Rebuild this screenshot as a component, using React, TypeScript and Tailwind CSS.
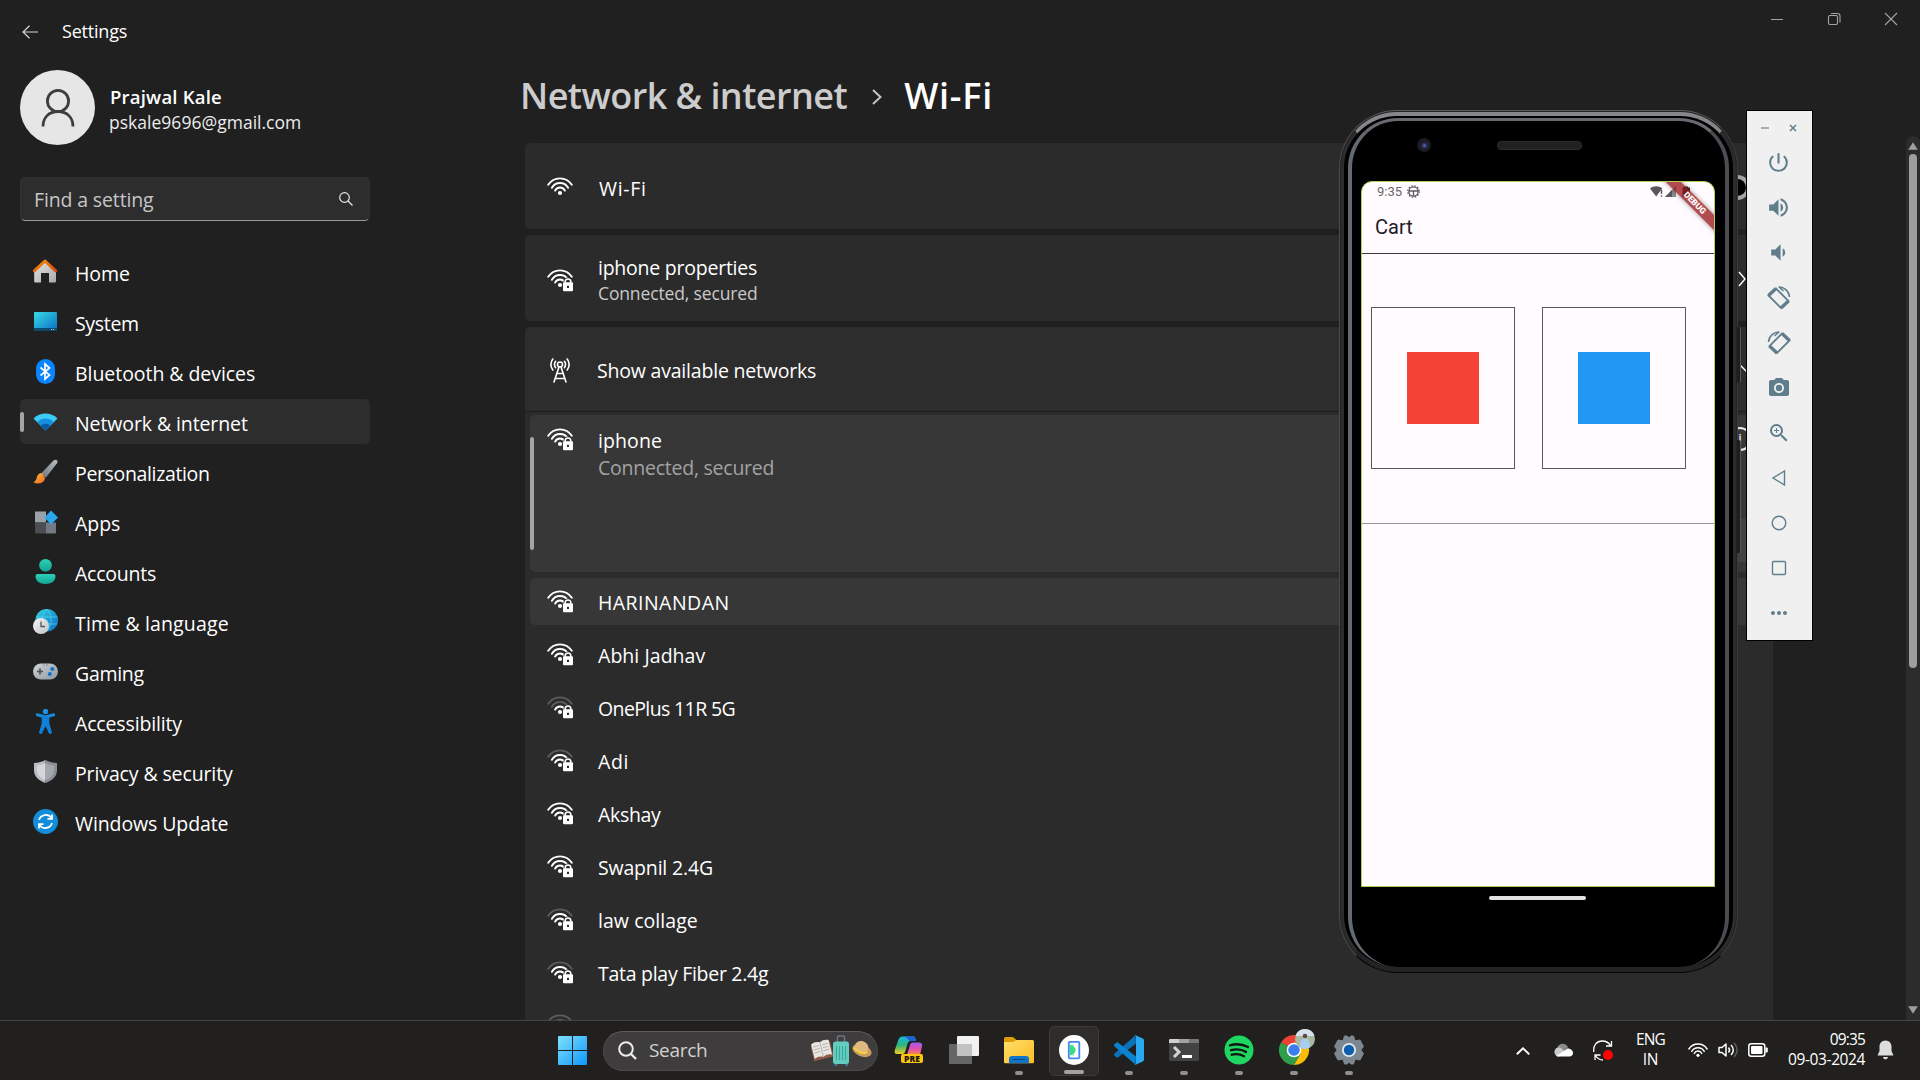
import React from "react";
import { MdPhotoCamera, MdVolumeDown, MdVolumeUp, MdZoomIn, MdMoreHoriz, MdPowerSettingsNew } from "react-icons/md";

/* ---------- Sidebar icons (25 x 25) ---------- */

const HomeIcon = () => (
  <svg width="25" height="25" viewBox="0 0 25 25">
    <defs>
      <linearGradient id="hb" x1="0" y1="0" x2="1" y2="1"><stop stopColor="#e6e6e6" /><stop offset="1" stopColor="#a9a9a9" /></linearGradient>
      <linearGradient id="hr" x1="0" y1="0" x2="1" y2="1"><stop stopColor="#f9920b" /><stop offset="1" stopColor="#d94a0a" /></linearGradient>
    </defs>
    <path d="M1.2 11 12 1.5 23 11v11.5a1 1 0 0 1-1 1h-6V14H8v9.500H2.200a1 1 0 0 1-1-1z" fill="url(#hb)" />
    <path d="M1.300 11.800 12 2 22.700 11.800" fill="none" stroke="url(#hr)" strokeWidth="3" strokeLinecap="round" strokeLinejoin="round" />
  </svg>
);

const SystemIcon = () => (
  <svg width="25" height="25" viewBox="0 0 25 25">
    <defs><linearGradient id="sy" x1="0" y1="0" x2="1" y2="1"><stop stopColor="#36dbe6" /><stop offset="1" stopColor="#0b6dc4" /></linearGradient></defs>
    <rect x="1" y="3" width="23" height="19" rx="1" fill="url(#sy)" />
    <path d="M1 19h23v2a1 1 0 0 1-1 1H2a1 1 0 0 1-1-1z" fill="#0b4a6d" />
    <path d="M18.200 20.500h1M20.200 20.500h1" stroke="#cfe8f5" />
  </svg>
);

const BluetoothIcon = () => (
  <svg width="25" height="25" viewBox="0 0 25 25">
    <rect x="3" y="0" width="19" height="25" rx="9.500" fill="#0a84ff" />
    <path d="M7.500 8.500l9 7.500-4.500 4V5L16.500 9l-9 7.500" fill="none" stroke="#fff" strokeWidth="1.700" />
  </svg>
);

const NetworkIcon = () => (
  <svg width="25" height="25" viewBox="0 0 25 25">
    <path d="M.5 9.500C7 2.800 18 2.800 24.500 9.500L12.500 21.500z" fill="#3ccbf4" />
    <path d="M4.300 13c4.700-4.600 11.700-4.600 16.400 0l-8.200 8.500z" fill="#1490df" />
    <path d="M7.800 16.700c2.700-2.500 6.700-2.500 9.400 0l-4.700 4.800z" fill="#0c59a4" />
  </svg>
);

const BrushIcon = () => (
  <svg width="25" height="25" viewBox="0 0 25 25">
    <defs>
      <linearGradient id="b1" x1="1" y1="0" x2="0" y2="1"><stop stopColor="#b9c0c6" /><stop offset="1" stopColor="#6a747c" /></linearGradient>
      <linearGradient id="b2" x1="0" y1="0" x2="1" y2="1"><stop stopColor="#fdc12d" /><stop offset="1" stopColor="#f0622a" /></linearGradient>
    </defs>
    <path d="M8 14.500 20.500 1.500C23 -.4 25.600 1.500 24 4.300L12.800 18.800z" fill="url(#b1)" />
    <path d="M9.300 14c-2.900-.2-5 1.600-5.500 4.600-.4 2.300-1.300 3.500-3.300 4.600 4 2.200 10.600 1.600 11.500-4z" fill="url(#b2)" />
  </svg>
);

const AppsIcon = () => (
  <svg width="25" height="25" viewBox="0 0 25 25">
    <path d="M2 2.500h11v11H2z" fill="#9ba1a9" />
    <path d="M2 13.500h11v11H3a1 1 0 0 1-1-1z" fill="#4a4e53" />
    <path d="M13 13.500h10v10a1 1 0 0 1-1 1h-9z" fill="#737982" />
    <path d="M18 1.500l7 7-7 7-6.500-7z" fill="#29a8ef" />
  </svg>
);

const AccountsIcon = () => (
  <svg width="25" height="25" viewBox="0 0 25 25">
    <defs><linearGradient id="ac" x1="0" y1="0" x2="0" y2="1"><stop stopColor="#2ed0b8" /><stop offset="1" stopColor="#12a594" /></linearGradient></defs>
    <circle cx="12.500" cy="6.300" r="6.300" fill="url(#ac)" />
    <path d="M4.500 15h16a2 2 0 0 1 2 2c0 5-4 8-10 8s-10-3-10-8a2 2 0 0 1 2-2z" fill="url(#ac)" />
  </svg>
);

const TimeIcon = () => (
  <svg width="25" height="25" viewBox="0 0 25 25">
    <defs>
      <linearGradient id="ti" x1="0" y1="0" x2="1" y2="1"><stop stopColor="#35d3e0" /><stop offset="1" stopColor="#0a6cc9" /></linearGradient>
      <linearGradient id="tc" x1="0" y1="0" x2="1" y2="1"><stop stopColor="#f6f6f6" /><stop offset="1" stopColor="#bfc1c4" /></linearGradient>
    </defs>
    <circle cx="13.700" cy="11.300" r="11.300" fill="url(#ti)" />
    <path d="M3 8h21.500M6 15h18M13.700 0c-6 7-6 15 0 22.500M13.700 0c6 7 6 15 0 22.500" stroke="#5fe0ee" strokeOpacity=".6" fill="none" />
    <circle cx="8" cy="17" r="8" fill="url(#tc)" />
    <path d="M8 12.500v5h4" fill="none" stroke="#555" strokeWidth="1.300" />
  </svg>
);

const GamingIcon = () => (
  <svg width="25" height="25" viewBox="0 0 25 25">
    <defs><linearGradient id="ga" x1="0" y1="0" x2="1" y2="1"><stop stopColor="#d0d4d9" /><stop offset="1" stopColor="#9097a0" /></linearGradient></defs>
    <rect x="0" y="4.500" width="25" height="16" rx="8" fill="url(#ga)" />
    <path d="M7 9.500v6M4 12.500h6" stroke="#4c5157" strokeWidth="1.700" />
    <circle cx="19.300" cy="10" r="2" fill="#1173cf" /><circle cx="16.800" cy="15" r="2" fill="#1173cf" />
    <path d="M10.500 6h1M13.500 6h1" stroke="#4c5157" />
  </svg>
);

const AccessIcon = () => (
  <svg width="25" height="25" viewBox="0 0 25 25">
    <circle cx="12.500" cy="2.600" r="2.700" fill="#1a94e8" />
    <path d="M4.300 5.800 12.500 8l8.200-2.200" fill="none" stroke="#1389e0" strokeWidth="3" strokeLinecap="round" strokeLinejoin="round" />
    <path d="M8.700 7.500h7.600v7l2.500 8.300a1.600 1.600 0 0 1-3.100 1L12.500 17l-3.200 6.800a1.600 1.600 0 0 1-3.100-1l2.500-8.300z" fill="#1080da" />
  </svg>
);

const ShieldIcon = () => (
  <svg width="25" height="25" viewBox="0 0 25 25">
    <path d="M12.500.8C9.500 3 5.500 3.800 1 4v7c0 6.500 4.500 10.500 11.500 13z" fill="#b9bdc4" />
    <path d="M12.500.8C15.500 3 19.500 3.800 24 4v7c0 6.500-4.500 10.500-11.500 13z" fill="#8c9096" />
    <path d="M12.500 4C10 5.700 7.500 6.300 4 6.500V11c0 4.700 3 7.800 8.500 10z" fill="#d3d7dc" />
    <path d="M12.500 4C15 5.700 17.500 6.300 21 6.500V11c0 4.700-3 7.800-8.500 10z" fill="#a4a8ae" />
  </svg>
);

const UpdateIcon = () => (
  <svg width="25" height="25" viewBox="0 0 25 25">
    <circle cx="12.500" cy="12.500" r="12.500" fill="#128ddb" />
    <path d="M6 11a7 7 0 0 1 12.500-2M19 5.500v4.300h-4.500M19 14a7 7 0 0 1-12.500 2M6 19.500v-4.300h4.500" fill="none" stroke="#fff" strokeWidth="1.800" />
  </svg>
);

const NAV: { label: string; icon: React.ReactNode; track: string; active?: boolean }[] = [
  { label: "Home", icon: <HomeIcon />, track: "tracking-[-0.05px]" },
  { label: "System", icon: <SystemIcon />, track: "tracking-[-0.33px]" },
  { label: "Bluetooth & devices", icon: <BluetoothIcon />, track: "tracking-[-0.05px]" },
  { label: "Network & internet", icon: <NetworkIcon />, track: "tracking-[-0.1px]", active: true },
  { label: "Personalization", icon: <BrushIcon />, track: "tracking-[-0.35px]" },
  { label: "Apps", icon: <AppsIcon />, track: "tracking-[-0.06px]" },
  { label: "Accounts", icon: <AccountsIcon />, track: "tracking-[-0.23px]" },
  { label: "Time & language", icon: <TimeIcon />, track: "tracking-[0.14px]" },
  { label: "Gaming", icon: <GamingIcon />, track: "tracking-[-0.29px]" },
  { label: "Accessibility", icon: <AccessIcon />, track: "tracking-[-0.15px]" },
  { label: "Privacy & security", icon: <ShieldIcon />, track: "tracking-[-0.12px]" },
  { label: "Windows Update", icon: <UpdateIcon />, track: "tracking-[-0.1px]" },
];

/* ---------- Network icons ---------- */

function Wifi({ bars = 3, locked = false, size = 26 }: { bars?: number; locked?: boolean; size?: number }) {
  const tone = (n: number) => (bars >= n ? "#fff" : "#5c5c5c");
  return (
    <svg width={size} height={(size * 23) / 26} viewBox="0 0 26 23" fill="none" strokeWidth="1.900" strokeLinecap="round" className="shrink-0">
      <path d="M1.200 7.800a14 14 0 0 1 23.600 0" stroke={tone(3)} />
      <path d="M4.900 10.800a9.300 9.300 0 0 1 16.200 0" stroke={tone(2)} />
      <path d="M8.100 13.600a5.400 5.400 0 0 1 9.800 0" stroke={tone(1)} />
      <circle cx="13" cy="16" r="2.100" fill="#fff" />
      {locked && (
        <>
          <path d="M18.200 14v-1a2.800 2.800 0 0 1 5.600 0V14" stroke="#2b2b2b" strokeWidth="3.600" />
          <path d="M18.200 14v-1.200a2.800 2.800 0 0 1 5.600 0V14" stroke="#fff" strokeWidth="1.600" />
          <rect x="16" y="13.300" width="10" height="9" rx="1" fill="#fff" />
          <rect x="20" y="16.800" width="2" height="2.200" fill="#2b2b2b" />
        </>
      )}
    </svg>
  );
}

const Antenna = () => (
  <svg width="20" height="25" viewBox="0 0 20 25" fill="none" stroke="#fff" strokeWidth="1.600" strokeLinecap="round" className="mx-[3px] shrink-0">
    <circle cx="10" cy="6.500" r="2.500" />
    <path d="M9 9 4 24M11 9l5 15M7.200 15.500h5.600M5.500 20.500h9" />
    <path d="M5.600 9.700a5.500 5.500 0 0 1 0-6.400M14.400 9.700a5.500 5.500 0 0 0 0-6.400M2.800 12a9.500 9.500 0 0 1 0-11M17.200 12a9.500 9.500 0 0 0 0-11" />
  </svg>
);

const NETWORKS = [
  { name: "Abhi Jadhav", bars: 3, track: "tracking-[0.05px]" },
  { name: "OnePlus 11R 5G", bars: 1, track: "tracking-[-0.62px]" },
  { name: "Adi", bars: 2, track: "tracking-[0.6px]" },
  { name: "Akshay", bars: 3, track: "tracking-[-0.33px]" },
  { name: "Swapnil 2.4G", bars: 3, track: "tracking-[-0.18px]" },
  { name: "law collage", bars: 2, track: "tracking-[0.05px]" },
  { name: "Tata play Fiber 2.4g", bars: 2, track: "tracking-[-0.28px]" },
];

function TitleBar() {
  return (
    <header className="flex h-[63px] shrink-0 items-start">
      <div className="flex h-[63px] flex-1 items-center pl-[22px]">
        <svg width="16" height="14" viewBox="0 0 16 14" fill="none" stroke="#d6d6d6" strokeWidth="1.200">
          <path d="M7.500.8 1 7l6.500 6.200M1 7h15" />
        </svg>
        <span className="ml-[24px] pb-px text-[18px] leading-none tracking-[-0.21px]">Settings</span>
      </div>
      <svg width="130" height="14" viewBox="0 0 130 14" fill="none" stroke="#a3a3a3" strokeWidth="1.100" className="mt-[12px] mr-[21px]">
        <path d="M2 7.500h12M116 1l12 12M128 1l-12 12" />
        <rect x="59.500" y="3.500" width="9" height="9" rx="1.500" />
        <path d="M62 1.500h6.500a2.500 2.500 0 0 1 2.500 2.500v6.500" />
      </svg>
    </header>
  );
}

function Sidebar() {
  return (
    <aside className="flex w-[370px] shrink-0 flex-col pt-[7px] pl-[20px]">
      <div className="flex h-[75px] items-center">
        <div className="flex h-[75px] w-[75px] items-center justify-center rounded-full bg-[#e6e6e6]">
          <svg width="34" height="38" viewBox="0 0 34 38" fill="none" stroke="#3d3d3d" strokeWidth="2.800">
            <circle cx="17" cy="12" r="10.600" />
            <path d="M2 37.500c0-9 6-15 15-15s15 6 15 15" />
          </svg>
        </div>
        <div className="ml-[14px] flex flex-col pt-[4px]">
          <span className="pl-px text-[18.5px] leading-[26px] font-semibold tracking-[0.21px]">Prajwal Kale</span>
          <span className="text-[17.5px] leading-[25px] tracking-[0.02px] text-[#ececec]">pskale9696@gmail.com</span>
        </div>
      </div>
      <div className="mt-[32px] flex h-[44px] items-center justify-between rounded-[5px] border border-[#303030] border-b-[#9a9a9a] bg-[#2d2d2d] pr-[16px] pl-[13px]">
        <span className="pt-px text-[19.5px] leading-none tracking-[-0.14px] text-[#c6c6c6]">Find a setting</span>
        <svg width="14" height="14" viewBox="0 0 14 14" fill="none" stroke="#e6e6e6" strokeWidth="1.200">
          <circle cx="5.500" cy="5.500" r="4.800" /><path d="m9 9 4.500 4.500" />
        </svg>
      </div>
      <nav className="mt-[28px] flex flex-col gap-[5px]">
        {NAV.map((n) => (
          <a key={n.label} className={n.active ? "flex h-[45px] items-center rounded-[5px] bg-[#2d2d2d]" : "flex h-[45px] items-center"}>
            <span className={n.active ? "h-[20px] w-[4px] rounded-full bg-[#a6a5a1]" : "w-[4px]"} />
            <span className="ml-[9px]">{n.icon}</span>
            <span className={`ml-[17px] pt-[4px] text-[19.5px] leading-none ${n.track}`}>{n.label}</span>
          </a>
        ))}
      </nav>
    </aside>
  );
}

function Content() {
  return (
    <main className="ml-[152px] flex w-[1251px] shrink-0 flex-col">
      <h1 className="flex h-[80px] shrink-0 items-center pb-[15px] text-[36px] leading-none font-semibold">
        <span className="-ml-[2px] tracking-[-0.56px] text-[#cccccc]">Network &amp; internet</span>
        <svg width="10" height="16" viewBox="0 0 10 16" fill="none" stroke="#c4c4c4" strokeWidth="2" className="mt-[2px] ml-[25px]">
          <path d="m1 1 7.500 7L1 15" />
        </svg>
        <span className="ml-[22px] tracking-[0.79px]">Wi-Fi</span>
      </h1>
      <div className="ml-[3px] flex shrink-0 flex-col gap-[6px] text-[19.5px] leading-none">
        <section className="flex h-[86px] items-center rounded-[5px] bg-[#2b2b2b] pr-[23px] pl-[22px]">
          <span className="pt-[4px]"><Wifi /></span>
          <span className="ml-[26px] flex-1 pt-[6px] tracking-[0.68px]">Wi-Fi</span>
          <span className="mt-[2px] flex h-[25px] w-[50px] items-center justify-end rounded-full bg-[#a6a5a1] pr-[4px]">
            <span className="h-[17px] w-[17px] rounded-full bg-black" />
          </span>
        </section>
        <section className="flex h-[86px] items-center rounded-[5px] bg-[#2b2b2b] pr-[27px] pl-[22px]">
          <span className="pt-[4px]"><Wifi locked /></span>
          <span className="ml-[25px] flex flex-1 flex-col pt-[5px]">
            <span className="leading-[26px] tracking-[-0.24px]">iphone properties</span>
            <span className="text-[17.5px] leading-[25px] tracking-[-0.14px] text-[#c8c8c8]">Connected, secured</span>
          </span>
          <svg width="8" height="16" viewBox="0 0 8 16" fill="none" stroke="#fff" strokeWidth="1.400" className="mt-[1px]"><path d="m1 1 6 7-6 7" /></svg>
        </section>
        <section className="flex flex-col rounded-t-[5px] bg-[#2b2b2b]">
          <div className="flex h-[85px] items-center rounded-t-[5px] border-b border-[#1d1d1d] bg-[#2d2d2d] pr-[25px] pl-[22px]">
            <span className="mt-[2px]"><Antenna /></span>
            <span className="ml-[24px] flex-1 pt-[4px] tracking-[-0.2px]">Show available networks</span>
            <svg width="14" height="8" viewBox="0 0 14 8" fill="none" stroke="#fff" strokeWidth="1.400"><path d="m1 7 6-6 6 6" /></svg>
          </div>
          <div className="flex flex-col px-[5px] pt-[3px]">
            <div className="flex h-[157px] items-start rounded-[5px] bg-[#373737]">
              <span className="mt-[22px] h-[113px] w-[4px] rounded-full bg-[#a6a5a1]" />
              <span className="mt-[13px] ml-[13px]"><Wifi locked /></span>
              <span className="mt-[12px] ml-[25px] flex flex-1 flex-col">
                <span className="leading-[27px] tracking-[0.1px]">iphone</span>
                <span className="leading-[27px] tracking-[-0.24px] text-[#a3a3a3]">Connected, secured</span>
              </span>
              <span className="flex flex-col items-end pt-[12px] pr-[16px]">
                <span className="flex h-[24px] w-[24px] items-center justify-center rounded-full border-2 border-[#e8e8e8] text-[14px] leading-none">i</span>
                <span className="mt-[68px] h-[43px] w-[150px] rounded-[5px] bg-[#434343]" />
              </span>
            </div>
            <div className="mt-[6px] flex h-[47px] items-center rounded-[5px] bg-[#373737] pl-[17px]">
              <Wifi locked />
              <span className="ml-[25px] pt-[3px] tracking-[0.45px]">HARINANDAN</span>
            </div>
            {NETWORKS.map((n) => (
              <div key={n.name} className="mt-[6px] flex h-[47px] items-center pl-[17px]">
                <Wifi locked bars={n.bars} />
                <span className={`ml-[25px] pt-[3px] ${n.track}`}>{n.name}</span>
              </div>
            ))}
            <div className="mt-[6px] flex h-[47px] items-center pl-[17px]"><Wifi bars={1} locked /></div>
          </div>
        </section>
      </div>
    </main>
  );
}

/* ---------- Emulator window ---------- */

function Phone() {
  return (
    <div className="absolute top-[110px] left-[1339px] h-[863px] w-[399px]">
      <span className="absolute top-[217px] left-[398px] h-[56px] w-[4px] rounded-r-[2px] border-r border-[#565656] bg-[#1e1e1e]" />
      <span className="absolute top-[330px] left-[398px] h-[113px] w-[4px] rounded-r-[2px] border-r border-[#565656] bg-[#1e1e1e]" />
      <div className="h-full w-full rounded-[58px] border border-t-[#5a5a5a] border-r-[#3c3c3c] border-b-[#050505] border-l-[#4a4a4a] bg-[#232323] p-px">
        <div className="h-full w-full rounded-[56px] border-t-4 border-r-[3px] border-b-4 border-l-[3px] border-t-[#85878a] border-r-[#2c2c2c] border-b-[#242424] border-l-[#2c2c2c] bg-black pt-[2px] pr-[4px] pl-[4px]">
          <div className="h-full w-full rounded-[50px] border-t-[3px] border-r-4 border-l-4 border-t-[#6a6870] border-r-[#4b4c52] border-l-[#646a72] bg-black pt-[16px]">
            <div className="flex h-[16px] items-center">
              <span className="ml-[65px] flex h-[14px] w-[14px] items-center justify-center rounded-full bg-[#1c1c1f]">
                <span className="flex h-[7px] w-[7px] items-center justify-center rounded-full bg-[#272c55]"><span className="h-[3px] w-[3px] rounded-full bg-[#5560a8]" /></span>
              </span>
              <span className="ml-[66px] h-[9px] w-[85px] rounded-[4px] border border-[#2c2c2c] bg-[#1f2020]" />
            </div>
            <Screen />
            <div className="mt-[9px] ml-[137px] h-[4px] w-[97px] rounded-full bg-[#e3e3e3]" />
          </div>
        </div>
      </div>
    </div>
  );
}

function Screen() {
  return (
    <div className="relative mt-[28px] ml-[9px] flex h-[706px] w-[354px] flex-col overflow-hidden rounded-t-[11px] border border-[#b3d154] bg-[#fffbfe] font-['Roboto',sans-serif]">
      <div className="flex h-[19px] items-center pl-[15px] text-[#66666a]">
        <span className="w-[30px] text-[13px] leading-none">9:35</span>
        <svg width="13" height="13" viewBox="0 0 13 13" fill="none" stroke="#5c5c60" strokeWidth="1.300">
          <circle cx="6.500" cy="6.500" r="4.600" /><circle cx="6.500" cy="6.500" r="5.700" strokeDasharray="1.500 1.500" />
          <path d="M2 6h9M6.500 6v5" />
        </svg>
        <svg width="44" height="13" viewBox="0 0 44 13" className="ml-[230px]">
          <path d="M0 3.500C3.500.5 9 .5 12.500 3.500L9.500 7 6.200 11.500z" fill="#58585c" />
          <path d="M11.500 5v4M11.500 10.300v1.500" stroke="#58585c" strokeWidth="1.400" />
          <path d="M15 12 26 1v11z" fill="#8d8d90" /><path d="M15 12 22 5v7z" fill="#58585c" />
          <path d="M34 1.500h4v1h2v9.500h-7.500V2.500H34z" fill="#303034" />
        </svg>
      </div>
      <div className="flex h-[52px] items-center pb-px pl-[13px] text-[20px] leading-none text-[#1c1b1f]">Cart</div>
      <div className="flex h-[271px] items-start gap-[27px] border-t border-b border-t-[#3a393b] border-b-[#979598] pt-[53px] pl-[9px]">
        <div className="flex h-[162px] w-[144px] items-start justify-center border border-[#59585b] pt-[44px]">
          <div className="h-[72px] w-[72px] bg-[#f44336]" />
        </div>
        <div className="flex h-[162px] w-[144px] items-start justify-center border border-[#59585b] pt-[44px]">
          <div className="h-[72px] w-[72px] bg-[#2196f3]" />
        </div>
      </div>
      <div className="absolute top-[15px] left-[292px] flex h-[11px] w-[80px] rotate-45 items-center justify-center bg-[#961214]/75 pl-[2px] text-[8.500px] leading-none font-black text-white shadow-[0_0_5px_rgba(0,0,0,0.4)]">
        DEBUG
      </div>
    </div>
  );
}

const Rotate = ({ flip = false }: { flip?: boolean }) => (
  <svg width="24" height="24" viewBox="0 0 24 24" fill="none" stroke="#607d8b" strokeWidth="1.500" className={flip ? "-scale-x-100" : ""}>
    <path d="M1.500 9.500 9 2.500 21.500 15 14 22z" strokeWidth="1.800" />
    <path d="M1.500 9.500 9 2.500M14 22l7.500-7" strokeWidth="3.400" />
    <path d="M11.500 1c5.500-.3 10.500 4 11 10M12 1l4.500 4" />
  </svg>
);

function EmulatorBar() {
  const buttons: React.ReactNode[] = [
    <MdPowerSettingsNew size={25} />,
    <MdVolumeUp size={25} />,
    <MdVolumeDown size={25} />,
    <Rotate />,
    <Rotate flip />,
    <MdPhotoCamera size={24} />,
    <MdZoomIn size={24} />,
    <svg width="24" height="24" viewBox="0 0 24 24" fill="none" stroke="#607d8b" strokeWidth="1.400"><path d="M17.500 5v14L6 12z" /></svg>,
    <svg width="24" height="24" viewBox="0 0 24 24" fill="none" stroke="#607d8b" strokeWidth="1.400"><circle cx="12" cy="12" r="6.800" /></svg>,
    <svg width="24" height="24" viewBox="0 0 24 24" fill="none" stroke="#607d8b" strokeWidth="1.400"><rect x="5.500" y="5.500" width="13" height="13" rx="1" /></svg>,
    <MdMoreHoriz size={24} />,
  ];
  return (
    <div className="absolute top-[110px] left-[1746px] flex h-[531px] w-[67px] flex-col items-center border border-black bg-[#f0f0f0] pr-[2px] text-[#607d8b]">
      <svg width="36" height="8" viewBox="0 0 36 8" fill="none" stroke="#607d8b" strokeWidth="1.500" className="mt-[13px] mb-[8px] shrink-0">
        <path d="M0 4h8" stroke="#9fb0b9" strokeWidth="2" /><path d="m29 1 6 6M35 1l-6 6" />
      </svg>
      {buttons.map((b, i) => (
        <span key={i} className="flex h-[45px] shrink-0 items-center justify-center">{b}</span>
      ))}
    </div>
  );
}

/* ---------- Taskbar ---------- */

const StartIcon = () => (
  <svg width="29" height="29" viewBox="0 0 29 29">
    <defs><linearGradient id="st" gradientUnits="userSpaceOnUse" x1="0" y1="0" x2="29" y2="29"><stop stopColor="#7fe0fd" /><stop offset="1" stopColor="#0f98fb" /></linearGradient></defs>
    <path d="M1 0h13v14H0V1a1 1 0 0 1 1-1zM15 0h13a1 1 0 0 1 1 1v13H15zM0 15h14v14H1a1 1 0 0 1-1-1zM15 15h14v13a1 1 0 0 1-1 1H15z" fill="url(#st)" />
  </svg>
);

const TravelArt = () => (
  <svg width="62" height="32" viewBox="0 0 62 32">
    <g transform="rotate(-14 11 16)">
      <path d="M1 8h20v16H1z" fill="#8f5a45" />
      <path d="M2 7c3-1.500 6-1.500 9 0v15c-3-1.500-6-1.500-9 0zM11 7c3-1.500 6-1.500 9 0v15c-3-1.500-6-1.500-9 0z" fill="#e9e6e1" />
      <path d="M3.500 10h6M3.500 13h6M3.500 16h6M12.500 10h6M12.500 13h6M12.500 16h6M11 7v15" stroke="#b5b2ae" strokeWidth=".9" />
    </g>
    <path d="M26.500 7V2a1 1 0 0 1 1-1h5a1 1 0 0 1 1 1v5" fill="none" stroke="#6d7684" strokeWidth="1.500" />
    <rect x="22" y="6.500" width="16" height="22.500" rx="2.500" fill="#62cdbf" />
    <path d="M25.500 11v14M28.500 11v14M31.500 11v14M34.500 11v14" stroke="#3aa79a" strokeWidth="1" />
    <path d="M23.500 29h3v2h-3zM34 29h3v2h-3z" fill="#476c8c" />
    <ellipse cx="51" cy="15.500" rx="10" ry="6" transform="rotate(22 51 15.500)" fill="#c79d64" />
    <path d="M43.500 13c0-6 5-8 9-6.500s6 5 4 9.500c-4 3-10 1-13-3z" fill="#e0b980" />
    <path d="M43 12.500c3 5 9 7 13.500 4.500" fill="none" stroke="#f6d23c" strokeWidth="2" />
  </svg>
);

const CopilotIcon = () => (
  <svg width="30" height="30" viewBox="0 0 30 30">
    <defs>
      <linearGradient id="c1" x1="0.300" y1="0" x2="0.300" y2="1"><stop stopColor="#18b6dc" /><stop offset=".5" stopColor="#2fb67c" /><stop offset="1" stopColor="#f5cf1c" /></linearGradient>
      <linearGradient id="c2" x1="0" y1="0" x2="0" y2="1"><stop stopColor="#9a5cf0" /><stop offset=".5" stopColor="#e04fb0" /><stop offset="1" stopColor="#fb8b4a" /></linearGradient>
    </defs>
    <path d="M8.500 1.500H19c2 0 2.500 2 3 4.500h-5c-2 0-3 1-3.500 3L11 17c-.6 1.500-1.500 2-3 2H3c-2.200 0-2.800-1.500-2.200-4L4.500 4.500c.7-2 2-3 4-3z" fill="url(#c1)" />
    <path d="M11 1.500h8c2 0 2.500 2 3 4.500h-5.500C15 6 14 4 11 1.500z" fill="#2160dc" />
    <path d="M18.500 7.500H25c2.800 0 3.600 1.800 3 4L26 20H13l3-10c.5-1.500 1.200-2.500 2.500-2.500z" fill="url(#c2)" />
    <rect x="7" y="19" width="22" height="9" rx="2" fill="#fdc60a" />
    <text x="18" y="26.500" textAnchor="middle" fontSize="8.500" fontWeight="800" fontFamily="Open Sans, sans-serif" fill="#1f1a10">PRE</text>
  </svg>
);

const TaskViewIcon = () => (
  <svg width="30" height="30" viewBox="0 0 30 30">
    <rect x="8" y="1" width="22" height="20" rx="1" fill="#f1f1f1" />
    <rect x="0" y="9" width="23" height="20" rx="1" fill="#6e6e6e" fillOpacity=".9" />
    <path d="M8 9h15v12H8z" fill="#c2c2c2" />
  </svg>
);

const ExplorerIcon = () => (
  <svg width="30" height="30" viewBox="0 0 30 30">
    <defs><linearGradient id="ex" x1="0" y1="0" x2="1" y2="1"><stop stopColor="#ffdf6b" /><stop offset="1" stopColor="#fbbc22" /></linearGradient></defs>
    <path d="M0 3.500a1.500 1.500 0 0 1 1.500-1.500H9l3.500 3V9H0z" fill="#dd9b06" />
    <path d="M0 7h9l3.500-2H28.500A1.500 1.500 0 0 1 30 6.500V27a1.200 1.200 0 0 1-1.200 1.200H1.200A1.200 1.200 0 0 1 0 27z" fill="url(#ex)" />
    <path d="M5 28.200V24a3 3 0 0 1 3-3h14a3 3 0 0 1 3 3v4.200z" fill="#1274c8" /><path d="M8.500 24.500h13" stroke="#0b4885" />
  </svg>
);

const EmulatorIcon = () => (
  <svg width="30" height="30" viewBox="0 0 30 30">
    <circle cx="15" cy="15" r="15" fill="#fff" />
    <rect x="9.800" y="6.800" width="10.500" height="16.500" rx="1" fill="none" stroke="#4285f4" strokeWidth="1.800" />
    <path d="M10.700 9.500c4 1 6 3 6 5.500s-2 4.700-6 5.500z" fill="#3ddc84" /><path d="M14.500 9.500 13.500 11M14.500 20.500l-1-1.500" stroke="#3ddc84" />
  </svg>
);

const CodeIcon = () => (
  <svg width="30" height="30" viewBox="0 0 30 30">
    <path d="M21.500.3 22 8.500 4.200 22.300c-.7.500-1.300.5-1.900 0L.6 20.700c-.8-.7-.7-1.600 0-2.300z" fill="#0b72b8" />
    <path d="M21.500 29.700 22 21.500 4.200 7.700c-.7-.5-1.300-.5-1.900 0L.6 9.300c-.8.700-.7 1.600 0 2.300z" fill="#0a84d0" />
    <path d="M21.500.3 28.800 3.500c.8.400 1.200 1 1.200 1.900v19.200c0 .9-.4 1.500-1.200 1.900l-7.300 3.200c-.9.300-1.500.1-2-.5 1 .7 2.500.2 2.500-1.200V2c0-1.400-1.500-1.900-2.500-1.200.5-.6 1.100-.8 2-.5z" fill="#2aa9f3" />
  </svg>
);

const TerminalIcon = () => (
  <svg width="30" height="30" viewBox="0 0 30 30">
    <rect y="4" width="30" height="22" rx="1.200" fill="#434343" />
    <path d="M1.200 4H10v4H0V5.200A1.200 1.200 0 0 1 1.200 4z" fill="#d0d0d0" /><path d="M10 4h10v4H10z" fill="#a3a3a3" /><path d="M20 4h8.800A1.200 1.200 0 0 1 30 5.200V8H20z" fill="#767676" />
    <path d="m5 12 5 5-5 5" fill="none" stroke="#d4d4d4" strokeWidth="3" /><path d="M13 21.500h10" stroke="#fff" strokeWidth="3" />
  </svg>
);

const SpotifyIcon = () => (
  <svg width="30" height="30" viewBox="0 0 30 30">
    <circle cx="15" cy="15" r="14.500" fill="#1ed760" />
    <path d="M6 10.300c6-1.700 12.500-1.200 18 1.700M7 15.200c5-1.400 10.500-.9 15 1.700M7.800 19.700c4.300-1 8.500-.6 12.300 1.500" fill="none" stroke="#141414" strokeWidth="2.400" strokeLinecap="round" />
  </svg>
);

const ChromeIcon = () => (
  <svg width="36" height="36" viewBox="0 0 36 36" className="-mt-[6px] ml-[6px]">
    <path d="M15 21 2 13.500a15 15 0 0 1 26 0z" fill="#ea4335" />
    <path d="M15 21 2 13.500A15 15 0 0 0 15 36z" fill="#2e9e4a" /><path d="m2 13.500 6.500 11.300L15 36l6.500-11.200z" fill="#2e9e4a" />
    <path d="M28 13.500H15V21l6.500 3.800L15 36a15 15 0 0 0 13-22.500z" fill="#fbbc05" />
    <circle cx="15" cy="21" r="7.300" fill="#fff" /><circle cx="15" cy="21" r="5.800" fill="#3b7ded" />
    <circle cx="26" cy="10" r="10" fill="#a7b9a0" />
    <path d="M16.500 7a10 10 0 0 1 19 0z" fill="#d6e1ec" />
    <path d="M21 18.500c0-7 2-9 5-9s5 2 5 9a10 10 0 0 1-10 0z" fill="#a9cdee" /><circle cx="26" cy="7" r="2.300" fill="#5b4a41" />
  </svg>
);

const GearIcon = () => (
  <svg width="30" height="30" viewBox="0 0 30 30">
    <path d="M10.500 1h2.500l2 1.800L17 1h2.500l1.500 4.800 5-.8 3.500 6.500-2.700 3.500 2.700 3.500L26 25l-5-.8L19.500 29H17l-2-1.800L13 29h-2.500L9 24.200 4 25 .5 18.500 3.200 15 .5 11.500 4 5l5 .8z" fill="#7d8790" stroke="#7d8790" strokeLinejoin="round" />
    <circle cx="15" cy="15" r="7" fill="#e6e8ea" /><circle cx="15" cy="15" r="5.200" fill="#0d5fae" />
  </svg>
);

const APPS: { icon: React.ReactNode; dot?: boolean; active?: boolean }[] = [
  { icon: <CopilotIcon /> },
  { icon: <TaskViewIcon /> },
  { icon: <ExplorerIcon />, dot: true },
  { icon: <EmulatorIcon />, active: true },
  { icon: <CodeIcon />, dot: true },
  { icon: <TerminalIcon />, dot: true },
  { icon: <SpotifyIcon />, dot: true },
  { icon: <ChromeIcon />, dot: true },
  { icon: <GearIcon />, dot: true },
];

function Taskbar() {
  return (
    <footer className="flex h-[60px] shrink-0 items-center border-t border-[#444342] bg-[#21201e]">
      <div className="ml-[558px]"><StartIcon /></div>
      <div className="ml-[16px] flex h-[40px] w-[275px] items-center rounded-full border border-[#4c4a4a] border-t-[#5d5b5b] bg-[#3e3c3c] pl-[14px]">
        <svg width="19" height="19" viewBox="0 0 19 19" fill="none" stroke="#ececec" strokeWidth="2">
          <circle cx="8" cy="8" r="6.800" /><path d="m13 13 5 5" strokeWidth="2.400" />
        </svg>
        <span className="ml-[12px] flex-1 text-[19px] leading-none tracking-[-0.3px] text-[#d2d1d1]">Search</span>
        <span className="mr-[4px]"><TravelArt /></span>
      </div>
      <div className="ml-[6px] flex gap-[5px]">
        {APPS.map((a, i) => (
          <div key={i} className={a.active ? "flex h-[50px] w-[50px] flex-col items-center rounded-[5px] border border-[#3b3a39] bg-[#2e2d2c] pt-[8px]" : "flex h-[50px] w-[50px] flex-col items-center pt-[9px]"}>
            <div className="h-[30px] shrink-0">{a.icon}</div>
            {a.dot && <span className="mt-[6px] h-[4px] w-[8px] shrink-0 rounded-full bg-[#8f8f8e]" />}
            {a.active && <span className="mt-[5px] h-[4px] w-[20px] shrink-0 rounded-full bg-[#a3a29e]" />}
          </div>
        ))}
      </div>
      <div className="ml-auto flex items-center">
        <svg width="14" height="8" viewBox="0 0 14 8" fill="none" stroke="#fff" strokeWidth="1.900"><path d="m.8 7.300 6.200-6 6.200 6" /></svg>
        <svg width="20" height="14" viewBox="0 0 20 14" className="mb-[2px] ml-[23px]">
          <path d="M4.500 4C6 .5 12 -1 15 4l-3 3-8-1z" fill="#8c8c8c" />
          <path d="M5 13.500a4.500 4.500 0 1 1 2-9l10 7z" fill="#c9c9c9" /><path d="M3 13 13 6.500c1-2 7-.5 7 3.500 0 2-1.500 3.500-3.500 3.500H5z" fill="#fff" />
        </svg>
        <svg width="21" height="21" viewBox="0 0 21 21" fill="none" stroke="#fff" strokeWidth="1.300" className="ml-[20px]">
          <path d="M.8 12C0 5 4 1 9 1c4 0 7 1.700 9 5M18.500 1v5H13M2 20v-5h5.500M2 15c2 3 4.500 5 8 5" />
          <circle cx="15" cy="15" r="5" fill="#ff0303" stroke="none" />
        </svg>
        <div className="ml-[21px] flex w-[31px] flex-col items-center pb-[3px] text-[15.5px] leading-[20px]">
          <span className="tracking-[-0.8px]">ENG</span>
          <span className="tracking-[-0.3px]">IN</span>
        </div>
        <span className="mt-[2px] ml-[22px]"><Wifi size={20} /></span>
        <svg width="20" height="16" viewBox="0 0 20 16" fill="none" stroke="#fff" strokeWidth="1.500" className="mb-px ml-[10px]">
          <path d="M1 5.500h3L8 2v12l-4-3.500H1z" strokeLinejoin="round" /><path d="M10.500 5.500c1.300 1.500 1.300 3.500 0 5M13 3c3 3 3 7 0 10" /><path d="M16 1c4 4 4 10 0 14" stroke="#5c5c5b" />
        </svg>
        <svg width="20" height="14" viewBox="0 0 20 14" fill="none" className="mb-px ml-[10px]">
          <rect x=".8" y=".8" width="16" height="12.400" rx="2.500" stroke="#fff" strokeWidth="1.500" /><rect x="3" y="3" width="11.500" height="8" rx="1" fill="#fff" /><path d="M17.500 4.500h1.300a1 1 0 0 1 1 1v3a1 1 0 0 1-1 1h-1.300z" fill="#fff" />
        </svg>
        <div className="flex w-[97px] flex-col items-end pb-[3px] text-[15.5px] leading-[20px]">
          <span className="tracking-[-0.85px]">09:35</span>
          <span className="tracking-[-0.4px]">09-03-2024</span>
        </div>
        <svg width="17" height="20" viewBox="0 0 17 20" fill="#dedddd" className="mr-[26px] mb-px ml-[12px]">
          <path d="M8.500.5C4.800.5 2.500 3.300 2.500 6.500V11L.5 15.500h16l-2-4.500V6.500c0-3.200-2.300-6-6-6zM6 17h5c-.3 1.500-1.200 2.300-2.500 2.300S6.300 18.500 6 17z" />
        </svg>
      </div>
    </footer>
  );
}

export default function App() {
  return (
    <div className="relative flex h-[1080px] w-[1920px] flex-col overflow-hidden bg-[#202020] font-['Open_Sans','Noto_Sans',sans-serif] text-white">
      <div className="flex h-[1020px] flex-col overflow-hidden">
        <TitleBar />
        <div className="flex min-h-0 flex-1">
          <Sidebar />
          <Content />
          <div className="mt-[73px] ml-auto flex w-[14px] flex-col items-center rounded-t-[7px] bg-[#2c2c2c] pt-[6px]">
            <svg width="10" height="8" viewBox="0 0 10 8" fill="#9f9f9f"><path d="M5 .3 9.800 7.700H.2z" /></svg>
            <span className="mt-[4px] h-[514px] w-[8px] rounded-full bg-[#9f9f9f]" />
            <svg width="10" height="8" viewBox="0 0 10 8" fill="#9f9f9f" className="mt-auto mb-[6px]"><path d="M5 7.700 9.800.3H.2z" /></svg>
          </div>
        </div>
      </div>
      <Taskbar />
      <Phone />
      <EmulatorBar />
    </div>
  );
}
